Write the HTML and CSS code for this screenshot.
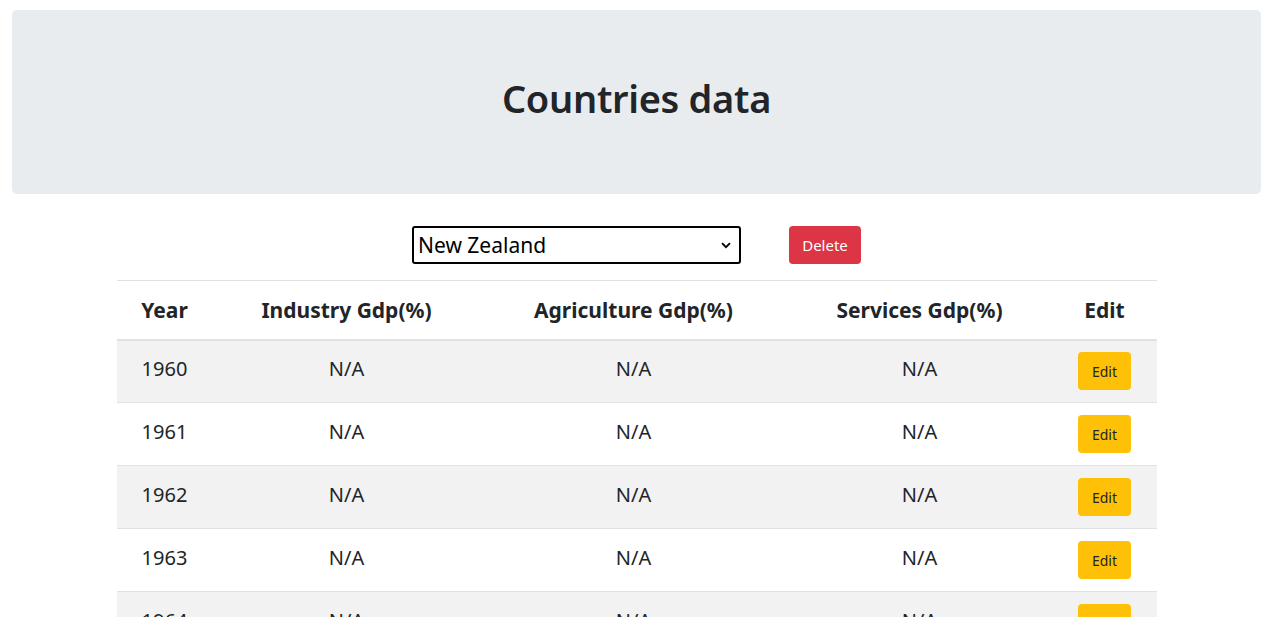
FILE: index.html
```html
<!DOCTYPE html>
<html>
<head>
<meta charset="utf-8">
<link rel="stylesheet" href="styles.css">
</head>
<body>
<div class="page">
  <header class="jumbo">
    <h1 class="title">Countries data</h1>
  </header>
  <div class="controls">
    <div class="select">
      <span class="select-text">New Zealand</span>
      <svg class="chev" width="10" height="7" viewBox="0 0 10 7"><path d="M1 1.2 L5 5.2 L9 1.2" fill="none" stroke="#000" stroke-width="1.8"/></svg>
    </div>
    <button class="btn btn-delete">Delete</button>
  </div>
  <table class="data">
    <colgroup>
      <col class="c1"><col class="c2"><col class="c3"><col class="c4"><col class="c5">
    </colgroup>
    <thead>
      <tr><th>Year</th><th>Industry Gdp(%)</th><th>Agriculture Gdp(%)</th><th>Services Gdp(%)</th><th>Edit</th></tr>
    </thead>
    <tbody>
      <tr class="odd"><td>1960</td><td>N/A</td><td>N/A</td><td>N/A</td><td class="act"><button class="btn btn-edit">Edit</button></td></tr>
      <tr><td>1961</td><td>N/A</td><td>N/A</td><td>N/A</td><td class="act"><button class="btn btn-edit">Edit</button></td></tr>
      <tr class="odd"><td>1962</td><td>N/A</td><td>N/A</td><td>N/A</td><td class="act"><button class="btn btn-edit">Edit</button></td></tr>
      <tr><td>1963</td><td>N/A</td><td>N/A</td><td>N/A</td><td class="act"><button class="btn btn-edit">Edit</button></td></tr>
      <tr class="odd"><td>1964</td><td>N/A</td><td>N/A</td><td>N/A</td><td class="act"><button class="btn btn-edit">Edit</button></td></tr>
    </tbody>
  </table>
</div>
</body>
</html>
```
FILE: styles.css
```css
* { box-sizing: border-box; }
html, body { margin: 0; padding: 0; background: #fff; }
body {
  font-family: "Noto Sans", "Open Sans", sans-serif;
  color: #212529;
  overflow: hidden;
}
.page { padding: 10px 12px 0 12px; }
.jumbo {
  background: #e9ecef;
  border-radius: 5px;
  height: 184px;
  display: flex;
  align-items: center;
  justify-content: center;
  margin-bottom: 32px;
}
.title {
  margin: 0 0 8px 0;
  font-size: 38px;
  font-weight: 600;
  line-height: 48px;
  letter-spacing: -0.3px;
}
.controls {
  display: flex;
  justify-content: center;
  gap: 48px;
  margin-bottom: 16px;
}
.select {
  width: 329px;
  height: 38px;
  border: 2px solid #000;
  border-radius: 3px;
  display: flex;
  align-items: center;
  justify-content: space-between;
  padding: 0 8px 0 4px;
  font-size: 21px;
  color: #000;
}
.chev { margin-top: 1px; }
.btn {
  border: none;
  border-radius: 4px;
  font-family: inherit;
  font-size: 14px;
  cursor: pointer;
}
.btn-delete {
  width: 72px;
  height: 38px;
  background: #dc3545;
  color: #fff;
  font-size: 15px;
}
.data {
  width: 1040px;
  margin: 0 auto;
  border-collapse: collapse;
  table-layout: fixed;
  font-size: 20px;
}
.c1 { width: 96px; }
.c2 { width: 268px; }
.c3 { width: 306px; }
.c4 { width: 266px; }
.c5 { width: 104px; }
.data th, .data td {
  text-align: center;
  vertical-align: middle;
  border-top: 1px solid #dee2e6;
  padding: 0;
}
.data th {
  height: 59px;
  font-weight: 700;
  font-size: 21px;
  border-bottom: 2px solid #dee2e6;
  padding-top: 1px;
}
.data td { height: 63px; padding-bottom: 5px; }
.data td.act { padding-bottom: 0; }
.data tbody tr:first-child td { border-top: none; }
.data tr.odd { background: #f2f2f2; }
.btn-edit {
  width: 53px;
  height: 38px;
  background: #ffc107;
  color: #212529;
  vertical-align: middle;
}
```
